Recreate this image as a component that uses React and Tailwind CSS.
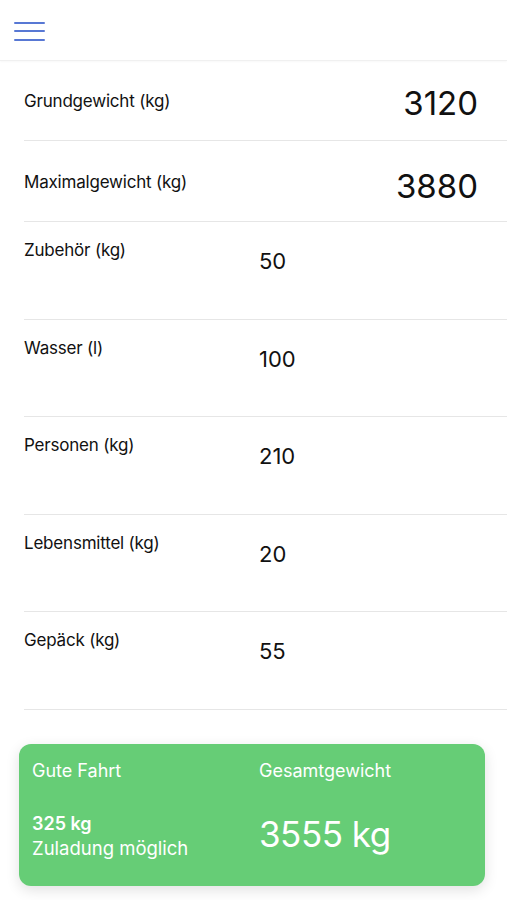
import React from "react";

const topRows = [
  { label: "Grundgewicht (kg)", value: "3120" },
  { label: "Maximalgewicht (kg)", value: "3880" },
];

const inputRows = [
  { label: "Zubehör (kg)", value: "50" },
  { label: "Wasser (l)", value: "100" },
  { label: "Personen (kg)", value: "210" },
  { label: "Lebensmittel (kg)", value: "20" },
  { label: "Gepäck (kg)", value: "55" },
];

export default function App() {
  return (
    <div
      className="min-h-[900px] w-[507px] bg-white text-[#111]"
      style={{ fontFamily: "Inter, 'Liberation Sans', sans-serif" }}
    >
      <header className="flex h-[61px] items-center border-b border-[#f0f0f0] px-[14px] shadow-[0_1px_2px_rgba(0,0,0,0.03)]">
        <button className="flex flex-col gap-[6.5px] pt-[2px]">
          <span className="block h-[2px] w-[31px] rounded bg-[#5878d4]" />
          <span className="block h-[2px] w-[31px] rounded bg-[#5878d4]" />
          <span className="block h-[2px] w-[31px] rounded bg-[#5878d4]" />
        </button>
      </header>

      <div className="pl-[24px]">
        {topRows.map((row, i) => (
          <div
            key={row.label}
            className={`flex items-center justify-between border-b border-[#e6e6e6] pr-[29px] ${
              i === 0 ? "h-[80px]" : "h-[81px]"
            }`}
          >
            <span className={`text-[17px] tracking-[-0.2px] ${i === 0 ? "mt-[2px]" : "mt-[4px]"}`}>
              {row.label}
            </span>
            <span className={`text-[33px] leading-none ${i === 0 ? "mt-[6px]" : "mt-[10px]"}`}>
              {row.value}
            </span>
          </div>
        ))}

        {inputRows.map((row) => (
          <div key={row.label} className="flex h-[97.6px] border-b border-[#e6e6e6]">
            <span className="w-[235px] pt-[16px] text-[17px] tracking-[-0.2px]">{row.label}</span>
            <span className="pt-[23px] text-[22px]">{row.value}</span>
          </div>
        ))}
      </div>

      <div className="px-[19px] pr-[22px] pt-[34px]">
        <div className="flex h-[142px] rounded-[12px] bg-[#66cd76] text-white shadow-[0_4px_14px_rgba(0,0,0,0.12)]">
          <div className="w-[240px] pl-[13px] pt-[18px]">
            <div className="text-[18px] leading-none">Gute Fahrt</div>
            <div className="mt-[31px] text-[18px] font-semibold leading-[25px]">325 kg</div>
            <div className="text-[18.5px] leading-[25px]">Zuladung möglich</div>
          </div>
          <div className="pt-[18px]">
            <div className="text-[18px] leading-none">Gesamtgewicht</div>
            <div className="mt-[37px] text-[35px] leading-none tracking-[-0.5px]">3555 kg</div>
          </div>
        </div>
      </div>
    </div>
  );
}
